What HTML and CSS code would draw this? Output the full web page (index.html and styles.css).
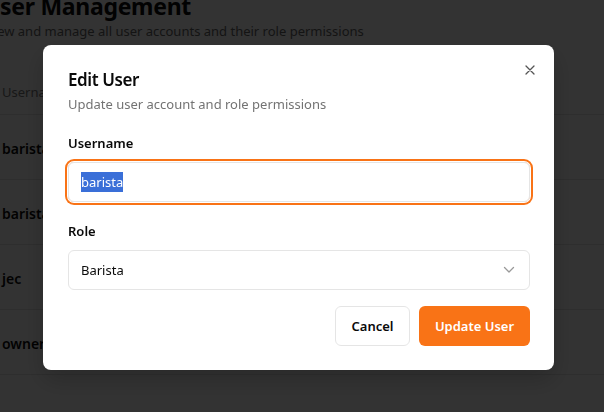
FILE: index.html
```html
<!DOCTYPE html>
<html>
<head>
<meta charset="utf-8">
<link rel="stylesheet" href="styles.css">
</head>
<body>
<main class="page">
  <h1 class="page-title">User Management</h1>
  <p class="page-desc">View and manage all user accounts and their role permissions</p>
  <div class="table">
    <div class="th">Username</div>
    <div class="tr">barista</div>
    <div class="tr">barista</div>
    <div class="tr">jec</div>
    <div class="tr">owner</div>
  </div>
</main>
<div class="overlay"></div>
<div class="modal">
  <button class="close" aria-label="Close">
    <svg width="10" height="10" viewBox="0 0 10 10"><path d="M1 1L9 9M9 1L1 9" stroke="#555" stroke-width="1.3" fill="none" stroke-linecap="round"/></svg>
  </button>
  <div class="head">
    <h2 class="title">Edit User</h2>
    <p class="desc">Update user account and role permissions</p>
  </div>
  <div class="field first">
    <div class="label">Username</div>
    <div class="input focused"><span class="sel">barista</span></div>
  </div>
  <div class="field">
    <div class="label">Role</div>
    <div class="input select"><span>Barista</span>
      <svg width="12" height="8" viewBox="0 0 12 8"><path d="M1.5 1.5L6 6L10.5 1.5" stroke="#999" stroke-width="1.3" fill="none" stroke-linecap="round" stroke-linejoin="round"/></svg>
    </div>
  </div>
  <div class="actions">
    <button class="btn cancel">Cancel</button>
    <button class="btn primary">Update User</button>
  </div>
</div>
</body>
</html>
```
FILE: styles.css
```css
* { box-sizing: border-box; }
html, body { margin: 0; padding: 0; }
body {
  width: 604px; height: 412px; overflow: hidden;
  background: #fff;
  font-family: "Noto Sans", "Open Sans", sans-serif;
  color: #0a0a0a;
}
.page { margin-left: -17px; }
.page-title { margin: -10px 0 0 0; font-size: 23px; line-height: 32px; font-weight: 700; letter-spacing: -0.3px; white-space: nowrap; }
.page-desc { margin: 0 0 0 3px; font-size: 13px; line-height: 18px; color: #666; white-space: nowrap; }
.table { margin-top: 32px; }
.th { height: 43px; line-height: 40px; font-size: 13px; color: #777; border-bottom: 1px solid #e5e5e5; padding-left: 19px; }
.tr { height: 65px; line-height: 68px; font-size: 14px; font-weight: 600; border-bottom: 1px solid #e5e5e5; padding-left: 19px; }
.overlay { position: fixed; inset: 0; background: rgba(0,0,0,0.8); }
.modal {
  position: fixed; top: 45px; left: 43px; width: 511px;
  background: #fff; border-radius: 8px;
  padding: 22px 24px 24px 25px;
  display: flex; flex-direction: column;
  box-shadow: 0 10px 25px rgba(0,0,0,0.2);
}
.close {
  position: absolute; top: 20px; right: 19px; width: 10px; height: 10px;
  padding: 0; border: 0; background: none; display: flex;
}
.head { display: flex; flex-direction: column; gap: 1px; }
.title { margin: 0; font-size: 17px; line-height: 26px; font-weight: 600; letter-spacing: -0.4px; }
.desc { margin: 0; font-size: 13px; line-height: 20px; color: #737373; }
.field { display: flex; flex-direction: column; gap: 9px; margin-top: 19px; }
.label { font-size: 13px; line-height: 20px; font-weight: 600; }
.input {
  height: 40px; border: 1px solid #e5e5e5; border-radius: 6px;
  padding: 0 12px; display: flex; align-items: center; font-size: 13px;
}
.focused { box-shadow: 0 0 0 1px #fff, 0 0 0 3px #f97316; }
.sel { background: #3a6fd8; color: #fff; line-height: 20px; }
.select { justify-content: space-between; padding-right: 14px; }
.actions { display: flex; justify-content: flex-end; gap: 9px; margin-top: 16px; }
.btn {
  height: 40px; border-radius: 6px; font-family: inherit; font-size: 13px; font-weight: 600;
  padding: 0 8px; cursor: pointer; white-space: nowrap;
}
.cancel { background: #fff; border: 1px solid #e5e5e5; color: #0a0a0a; width: 75px; }
.primary { background: #f97316; border: 0; color: #fff; width: 111px; }
```
